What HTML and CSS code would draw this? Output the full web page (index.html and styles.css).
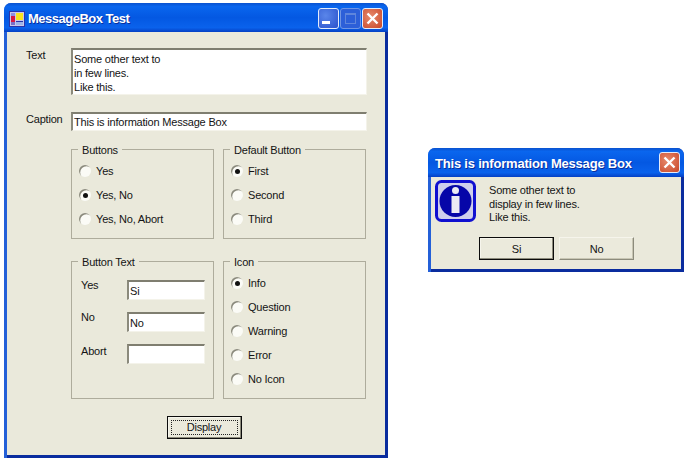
FILE: index.html
```html
<!DOCTYPE html>
<html lang="en">
<head>
<meta charset="utf-8">
<title>MessageBox Test</title>
<link rel="stylesheet" href="styles.css">
</head>
<body>
<section class="window main-window">
  <header class="titlebar">
    <svg class="app-icon" width="16" height="16" viewBox="0 0 16 16">
      <rect x="0.5" y="0.5" width="15" height="15" fill="#c8c8ea" stroke="#2a34a8"/>
      <rect x="2" y="2" width="4" height="3" fill="#8f8fe0"/>
      <rect x="2" y="5" width="4" height="6" fill="#d81840"/>
      <rect x="2" y="11" width="4" height="3" fill="#7a70c8"/>
      <rect x="7" y="2" width="7" height="7" fill="#f6e41e"/>
      <rect x="7" y="10" width="7" height="1" fill="#2a34a8"/>
      <rect x="7" y="11" width="7" height="3" fill="#9cb4e8"/>
    </svg>
    <span class="title">MessageBox Test</span>
    <div class="controls">
      <span class="ctl ctl-blue"><svg width="21" height="21" viewBox="0 0 21 21"><rect x="4" y="13" width="8" height="3" fill="#fff"/></svg></span>
      <span class="ctl ctl-dim"><svg width="21" height="21" viewBox="0 0 21 21"><rect x="5.5" y="5.5" width="10" height="10" fill="none" stroke="#5f86dc"/><rect x="5" y="5" width="11" height="2" fill="#5f86dc"/></svg></span>
      <span class="ctl ctl-red"><svg width="21" height="21" viewBox="0 0 21 21"><path d="M5.5 5.5 15.5 15.5M15.5 5.5 5.5 15.5" stroke="#fff" stroke-width="2.4"/></svg></span>
    </div>
  </header>
  <div class="client">
    <div class="field-row text-row">
      <span class="field-label">Text</span>
      <div class="edit multiline">Some other text to<br>in few lines.<br>Like this.</div>
    </div>
    <div class="field-row caption-row">
      <span class="field-label">Caption</span>
      <div class="edit single">This is information Message Box</div>
    </div>
    <div class="groups">
      <fieldset class="group top-group">
        <legend>Buttons</legend>
        <div class="radio-list">
          <div class="radio-row"><span class="radio"></span>Yes</div>
          <div class="radio-row"><span class="radio checked"></span>Yes, No</div>
          <div class="radio-row"><span class="radio"></span>Yes, No, Abort</div>
        </div>
      </fieldset>
      <fieldset class="group top-group">
        <legend>Default Button</legend>
        <div class="radio-list">
          <div class="radio-row"><span class="radio checked"></span>First</div>
          <div class="radio-row"><span class="radio"></span>Second</div>
          <div class="radio-row"><span class="radio"></span>Third</div>
        </div>
      </fieldset>
      <fieldset class="group bottom-group">
        <legend>Button Text</legend>
        <div class="text-list">
          <div class="text-item"><span class="item-label">Yes</span><div class="edit small">Si</div></div>
          <div class="text-item"><span class="item-label">No</span><div class="edit small">No</div></div>
          <div class="text-item"><span class="item-label item-label-low">Abort</span><div class="edit small"></div></div>
        </div>
      </fieldset>
      <fieldset class="group bottom-group">
        <legend>Icon</legend>
        <div class="radio-list">
          <div class="radio-row"><span class="radio checked"></span>Info</div>
          <div class="radio-row"><span class="radio"></span>Question</div>
          <div class="radio-row"><span class="radio"></span>Warning</div>
          <div class="radio-row"><span class="radio"></span>Error</div>
          <div class="radio-row"><span class="radio"></span>No Icon</div>
        </div>
      </fieldset>
    </div>
    <div class="display-row">
      <div class="button default display"><span class="focus">Display</span></div>
    </div>
  </div>
</section>

<section class="window msg-window">
  <header class="titlebar msg-titlebar">
    <span class="title msg-title">This is information Message Box</span>
    <div class="controls">
      <span class="ctl ctl-red"><svg width="21" height="21" viewBox="0 0 21 21"><path d="M5.5 5.5 15.5 15.5M15.5 5.5 5.5 15.5" stroke="#fff" stroke-width="2.4"/></svg></span>
    </div>
  </header>
  <div class="client msg-client">
    <div class="msg-body">
      <svg class="info-icon" width="41" height="42" viewBox="0 0 41 42">
        <rect x="1.5" y="1.5" width="38" height="39" rx="5" fill="#cfcfec" stroke="#1010d0" stroke-width="3"/>
        <circle cx="20.5" cy="21" r="16" fill="#0606a8"/>
        <circle cx="20.5" cy="10.5" r="3.5" fill="#ecebf4"/>
        <rect x="16.5" y="16" width="8" height="17" fill="#ecebf4"/>
      </svg>
      <p class="msg-text">Some other text to<br>display in few lines.<br>Like this.</p>
    </div>
    <div class="msg-buttons">
      <div class="button default">Si</div>
      <div class="button">No</div>
    </div>
  </div>
</section>
</body>
</html>
```

FILE: styles.css
```css
* { box-sizing: border-box; }

html, body {
  margin: 0;
  width: 686px;
  height: 460px;
  overflow: hidden;
  background: #fff;
}

body {
  position: relative;
  font-family: "Liberation Sans", "Noto Sans", sans-serif;
  font-size: 11px;
  letter-spacing: -0.2px;
  color: #141414;
}

.window {
  position: absolute;
  display: flex;
  flex-direction: column;
  border-radius: 7px 7px 0 0;
  background: linear-gradient(to right, #2460d8 0, #2460d8 50%, #0a2c9e 50%, #0a2c9e 100%);
  overflow: hidden;
}

.main-window { left: 4px; top: 3px; width: 384px; height: 455px; }
.msg-window { left: 428px; top: 148px; width: 256px; height: 124px; }

.titlebar {
  flex: none;
  height: 29px;
  display: flex;
  align-items: center;
  padding: 0 5px;
  background: linear-gradient(to bottom, #0a52cf 0, #0a66ee 12%, #0458e2 50%, #0a62ec 85%, #0540c4 100%);
}

.msg-titlebar { padding: 0 4px 0 7px; }

.app-icon { flex: none; margin: 2px 3px 0 0; }

.title {
  padding-top: 2px;
  font-size: 13px;
  font-weight: 700;
  letter-spacing: -0.5px;
  color: #fff;
  white-space: nowrap;
  text-shadow: 1px 1px 0 #0a2f9c;
}

.msg-title { letter-spacing: -0.2px; }

.controls { margin-left: auto; display: flex; gap: 1px; }
.main-window .controls { padding-top: 2px; }

.ctl {
  width: 21px;
  height: 21px;
  border-radius: 3px;
  border: 1px solid #e4ecfb;
  overflow: hidden;
  display: block;
}

.ctl svg { display: block; margin: -1px; }

.ctl-blue { background: radial-gradient(circle at 35% 35%, #5a86ea, #2a52cc); }
.ctl-dim { background: #2c5fd8; border-color: #6f95e4; }
.ctl-red { background: radial-gradient(circle at 40% 40%, #e88a6c, #c8482a); }

.client {
  flex: 1;
  margin: 0 3px 3px;
  background: #eae9db;
  box-shadow: 0 3px 0 #0a2c9e;
  padding: 16px 17px 0 19px;
}

.field-row { display: flex; }

.field-label { width: 45px; flex: none; line-height: 14px; }

.text-row { height: 47px; }
.caption-row { margin-top: 17px; height: 19px; }

.edit {
  background: #fff;
  border-top: 2px solid #7f7e70;
  border-left: 2px solid #8b8a7c;
  border-right: 1px solid #f4f3ea;
  border-bottom: 1px solid #f4f3ea;
  line-height: 14px;
  padding-left: 1px;
  white-space: nowrap;
}

.multiline { width: 296px; height: 47px; padding-top: 2px; }
.single { width: 296px; height: 19px; padding-top: 1px; }

.groups {
  display: grid;
  grid-template-columns: 143px 143px;
  column-gap: 9px;
  row-gap: 15px;
  margin: 11px 0 0 45px;
  width: 295px;
}

.group {
  margin: 0;
  padding: 0;
  min-width: 0;
  border: 1px solid #aeac9c;
}

.top-group { height: 97px; }
.bottom-group { height: 145px; }

.group legend {
  margin-left: 6px;
  padding: 2px 4px 0;
  line-height: 13px;
}

.radio-list {
  display: flex;
  flex-direction: column;
  gap: 8px;
  padding: 6px 0 0 7px;
}

.radio-row {
  display: flex;
  align-items: center;
  height: 16px;
  line-height: 16px;
}

.radio {
  flex: none;
  width: 12px;
  height: 12px;
  margin-right: 5px;
  border-radius: 50%;
  background: #fbfbf6;
  box-shadow: inset 1.5px 1.5px 0 -0.3px #8b8a7c;
  display: flex;
  align-items: center;
  justify-content: center;
}

.radio.checked::after {
  content: "";
  width: 5px;
  height: 5px;
  border-radius: 50%;
  background: #111;
}

.text-list { display: flex; flex-direction: column; gap: 12px; padding: 11px 0 0 9px; }

.text-item { display: flex; height: 20px; }

.item-label { width: 46px; flex: none; line-height: 10px; }
.item-label-low { margin-top: 2px; }

.small { width: 78px; height: 20px; padding-top: 2px; }

.display-row { display: flex; justify-content: center; margin-top: 17px; padding-left: 14px; }

.button {
  width: 75px;
  height: 23px;
  background: #ebeadc;
  border: 1px solid #f6f5ec;
  border-right-color: #8c8b7c;
  border-bottom-color: #8c8b7c;
  box-shadow: inset -1px -1px 0 #c8c6b4;
  display: flex;
  align-items: center;
  justify-content: center;
}

.button.default {
  border: 1px solid #0c0c0c;
  box-shadow: inset -1px -1px 0 #8c8b7c, inset 1px 1px 0 #f6f5ec;
}

.display { height: 23px; padding: 3px; }

.focus {
  flex: 1;
  align-self: stretch;
  border: 1px dotted #222;
  text-align: center;
  line-height: 13px;
}

.msg-client { padding: 3px 4px 0 4px; }

.msg-body { display: flex; height: 57px; }

.info-icon { flex: none; }

.msg-text { margin: 4px 0 0 13px; line-height: 13.5px; }

.msg-buttons { display: flex; gap: 5px; padding-left: 44px; }
```
